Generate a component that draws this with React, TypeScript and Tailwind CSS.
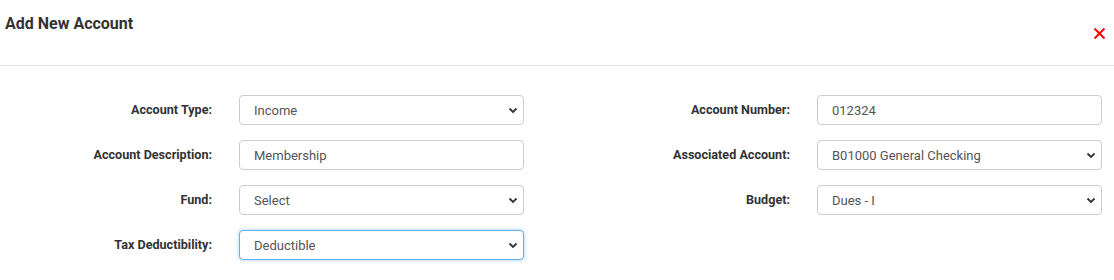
import React from 'react';

const Chevron = () => (
  <svg
    className="pointer-events-none absolute right-[6px] top-1/2 -translate-y-1/2"
    width="10"
    height="10"
    viewBox="0 0 10 10"
  >
    <path d="M1.5 3.5 L5 7 L8.5 3.5" fill="none" stroke="#333" strokeWidth="1.8" />
  </svg>
);

const Select = ({ value, focused = false }: { value: string; focused?: boolean }) => (
  <div className="relative w-[285px]">
    <select
      defaultValue={value}
      className={
        'h-[30px] w-full appearance-none rounded-[4px] border bg-white pl-[14px] pr-6 pt-[1px] text-[13px] text-[#555] outline-none ' +
        (focused
          ? 'border-[#66afe9] shadow-[0_0_4px_rgba(102,175,233,0.6)]'
          : 'border-[#ccc]')
      }
    >
      <option>{value}</option>
    </select>
    <Chevron />
  </div>
);

const Input = ({ value }: { value: string }) => (
  <input
    defaultValue={value}
    className="h-[30px] w-[285px] rounded-[4px] border border-[#ccc] bg-white pl-[14px] pt-[1px] text-[13px] text-[#555] outline-none"
  />
);

const Row = ({
  leftLabel,
  left,
  rightLabel,
  right,
}: {
  leftLabel: string;
  left: React.ReactNode;
  rightLabel?: string;
  right?: React.ReactNode;
}) => (
  <div className="flex h-[30px] items-center">
    <label className="w-[212px] text-right text-[12.6px] font-bold text-[#333]">{leftLabel}</label>
    <div className="ml-[27px]">{left}</div>
    {rightLabel && (
      <>
        <label className="w-[266px] text-right text-[12.6px] font-bold text-[#333]">{rightLabel}</label>
        <div className="ml-[27px]">{right}</div>
      </>
    )}
  </div>
);

export default function App() {
  return (
    <div className="h-[280px] w-[1114px] bg-white font-['Roboto',sans-serif]">
      <div className="flex h-[66px] border-b border-[#e5e5e5]">
        <h4 className="pl-[5px] pt-[12px] text-[16px] font-bold text-[#333]">Add New Account</h4>
        <button className="ml-auto mr-[8px] mt-[27px] h-[13px] w-[13px]">
          <svg width="13" height="13" viewBox="0 0 13 13">
            <path d="M1.5 1.5 L11.5 11.5 M11.5 1.5 L1.5 11.5" stroke="#ff0000" strokeWidth="2" />
          </svg>
        </button>
      </div>
      <div className="flex flex-col gap-[15px] pt-[29px]">
        <Row
          leftLabel="Account Type:"
          left={<Select value="Income" />}
          rightLabel="Account Number:"
          right={<Input value="012324" />}
        />
        <Row
          leftLabel="Account Description:"
          left={<Input value="Membership" />}
          rightLabel="Associated Account:"
          right={<Select value="B01000 General Checking" />}
        />
        <Row
          leftLabel="Fund:"
          left={<Select value="Select" />}
          rightLabel="Budget:"
          right={<Select value="Dues - I" />}
        />
        <Row leftLabel="Tax Deductibility:" left={<Select value="Deductible" focused />} />
      </div>
    </div>
  );
}
